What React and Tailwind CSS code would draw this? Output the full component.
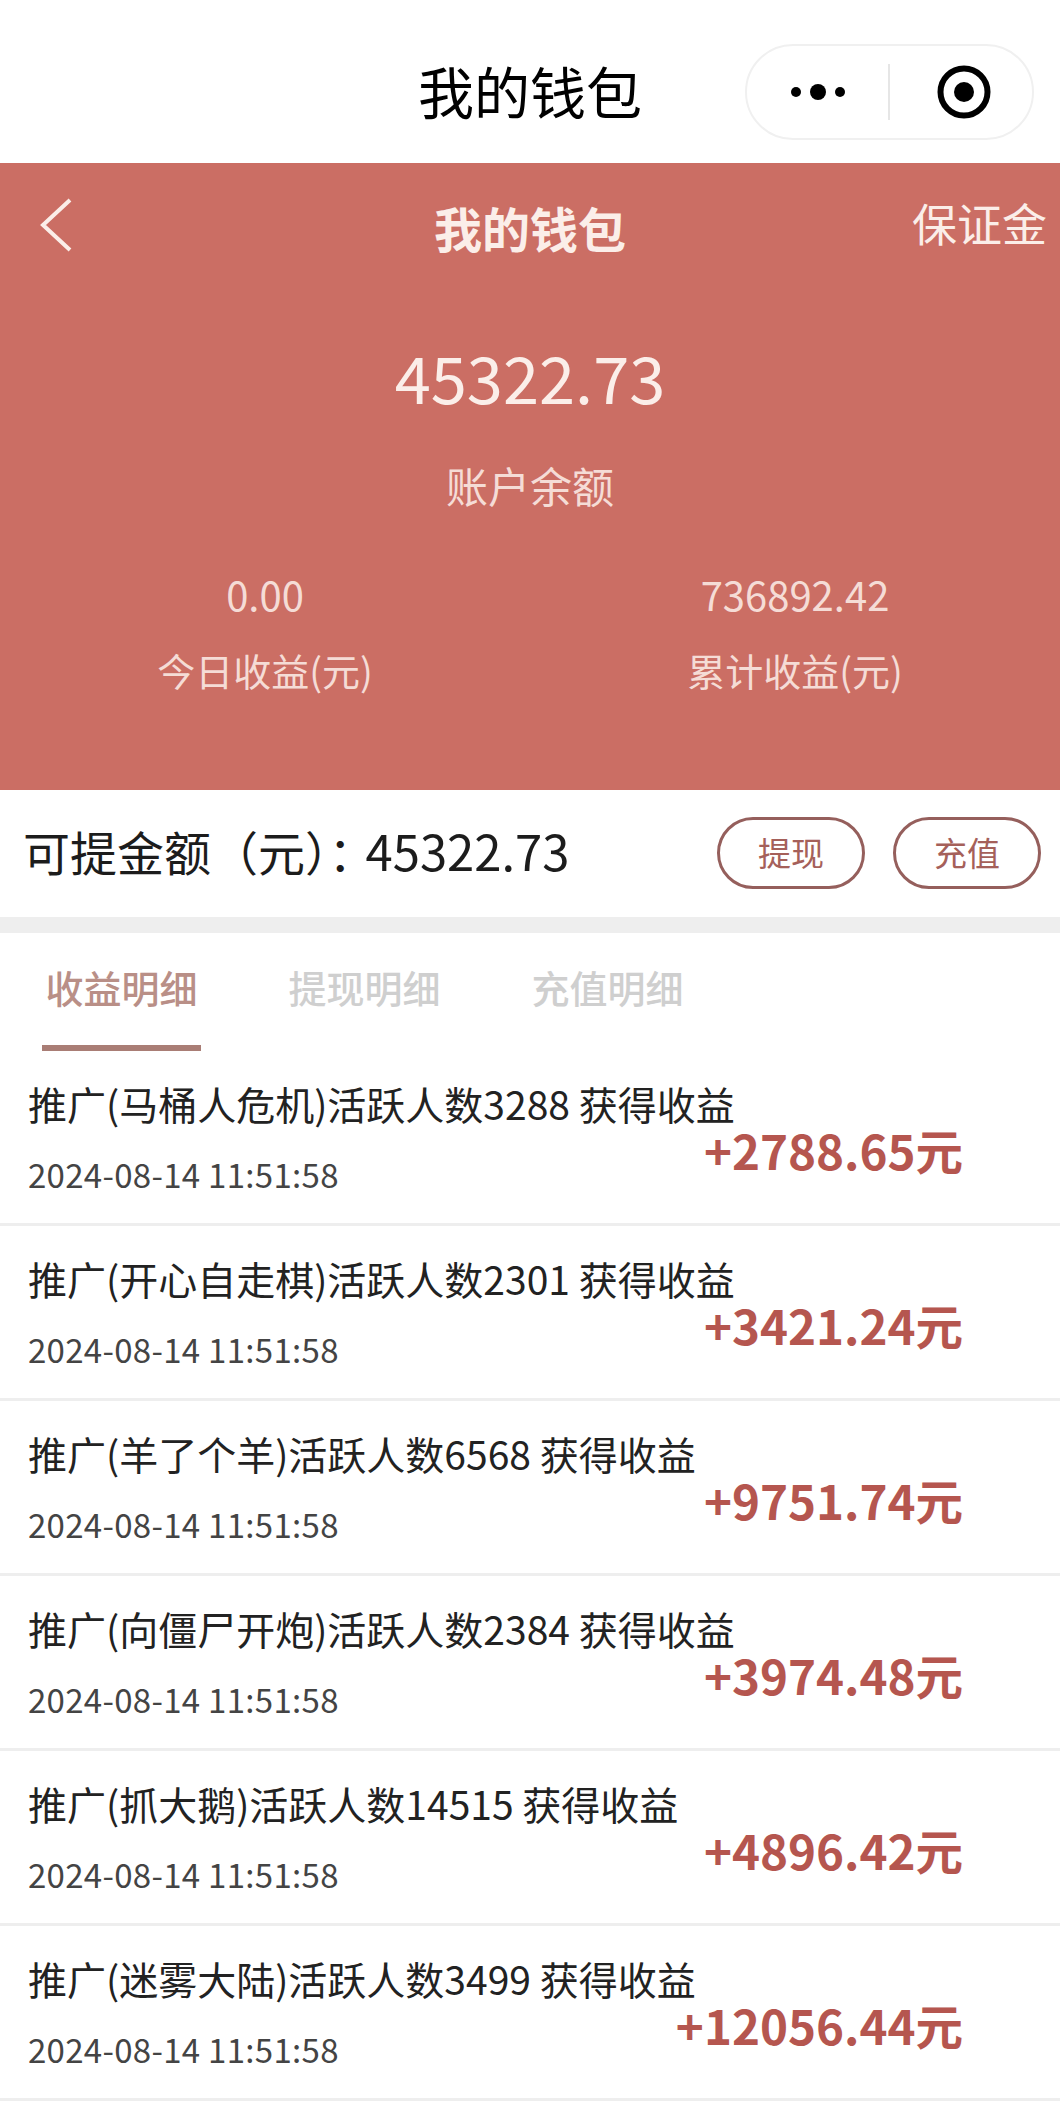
import React from 'react';

const cjk = { fontFamily: '"Noto Sans CJK SC", "Noto Sans", sans-serif' };

const records = [
  { title: '推广(马桶人危机)活跃人数3288 获得收益', amount: '+2788.65元' },
  { title: '推广(开心自走棋)活跃人数2301 获得收益', amount: '+3421.24元' },
  { title: '推广(羊了个羊)活跃人数6568 获得收益', amount: '+9751.74元' },
  { title: '推广(向僵尸开炮)活跃人数2384 获得收益', amount: '+3974.48元' },
  { title: '推广(抓大鹅)活跃人数14515 获得收益', amount: '+4896.42元' },
  { title: '推广(迷雾大陆)活跃人数3499 获得收益', amount: '+12056.44元' },
];

const RecordRow = ({ title, amount }) => (
  <div className="h-[175px] border-b-[3px] border-[#eeeeee] pl-[28px] pr-[97px] pt-[25px]">
    <div className="text-[39px] leading-[54px] text-[#222222] whitespace-nowrap">{title}</div>
    <div className="flex items-start justify-between">
      <div className="mt-[23px] text-[33px] leading-[42px] tracking-[0.3px] text-[#444444] whitespace-nowrap">2024-08-14 11:51:58</div>
      <div className="-mt-[10px] text-[47.5px] leading-[60px] font-semibold text-[#b5564f] whitespace-nowrap">{amount}</div>
    </div>
  </div>
);

export default function App() {
  return (
    <div className="w-[1060px] h-[2114px] overflow-hidden bg-white" style={cjk}>
      {/* WeChat title bar */}
      <div className="relative h-[163px] flex items-center justify-center pt-[16px]">
        <div className="text-[56px] leading-none text-black">我的钱包</div>
        <div className="absolute left-[745px] top-[44px] w-[289px] h-[96px] rounded-[48px] border-2 border-[#f0f0f0] flex items-center">
          <div className="w-[141px] flex items-center justify-center gap-[9px]">
            <span className="w-[10px] h-[10px] rounded-full bg-black" />
            <span className="w-[16px] h-[16px] rounded-full bg-black" />
            <span className="w-[10px] h-[10px] rounded-full bg-black" />
          </div>
          <div className="w-[2px] h-[56px] bg-[#e6e6e6]" />
          <div className="flex-1 flex items-center justify-center pl-[5px]">
            <svg width="54" height="54" viewBox="0 0 54 54">
              <circle cx="27" cy="27" r="23.5" fill="none" stroke="#000" strokeWidth="6" />
              <circle cx="27" cy="27" r="10" fill="#000" />
            </svg>
          </div>
        </div>
      </div>

      {/* Wallet header */}
      <div className="relative h-[627px] bg-[#cb6e64] text-[#fbeee9]">
        <svg className="absolute left-[39px] top-[35px]" width="34" height="54" viewBox="0 0 34 54">
          <path d="M31 2 L4 27 L31 52" fill="none" stroke="#fbeee9" strokeWidth="4" />
        </svg>
        <div className="absolute right-[13px] top-[31px] text-[45px] leading-[58px]">保证金</div>
        <div className="pt-[34px] text-center text-[48px] leading-[60px] font-bold">我的钱包</div>
        <div className="mt-[83px] text-center text-[65px] leading-[72px]">45322.73</div>
        <div className="mt-[43px] text-center text-[42px] leading-[60px] text-[#f5dcd6]">账户余额</div>
        <div className="mt-[51px] flex text-[#f5dcd6]">
          <div className="w-[530px] text-center">
            <div className="text-[40px] leading-[56px]">0.00</div>
            <div className="mt-[20px] text-[38px] leading-[56px]">今日收益(元)</div>
          </div>
          <div className="w-[530px] text-center">
            <div className="text-[40px] leading-[56px]">736892.42</div>
            <div className="mt-[20px] text-[38px] leading-[56px]">累计收益(元)</div>
          </div>
        </div>
      </div>

      {/* Withdrawable amount */}
      <div className="h-[127px] flex items-center pl-[23px] pr-[19px] pb-[2px]">
        <div className="flex-1 -mt-[6px] text-[47px] leading-none text-[#1c1c1c] whitespace-nowrap">
          可提金额（元）：<span className="-ml-[10px] text-[49px]">45322.73</span>
        </div>
        <div className="flex gap-[28px]">
          <button className="w-[148px] h-[72px] rounded-[36px] border-[3px] border-[#955f5c] text-[33px] text-[#a5605a]">提现</button>
          <button className="w-[148px] h-[72px] rounded-[36px] border-[3px] border-[#955f5c] text-[33px] text-[#a5605a]">充值</button>
        </div>
      </div>
      <div className="h-[16px] bg-[#eeeeee]" />

      {/* Tabs */}
      <div className="h-[118px] flex pl-[42px] gap-[84px]">
        <div className="relative w-[159px] pt-[27px] text-center text-[38px] leading-[54px] font-medium text-[#b98f87] whitespace-nowrap">
          收益明细
          <div className="absolute left-0 right-0 bottom-0 h-[6px] bg-[#a97d75]" />
        </div>
        <div className="w-[159px] pt-[27px] text-center text-[38px] leading-[54px] font-medium text-[#cfcfcf] whitespace-nowrap">提现明细</div>
        <div className="w-[159px] pt-[27px] text-center text-[38px] leading-[54px] font-medium text-[#cfcfcf] whitespace-nowrap">充值明细</div>
      </div>

      {/* Records */}
      {records.map((r) => (
        <RecordRow key={r.title} title={r.title} amount={r.amount} />
      ))}
    </div>
  );
}
